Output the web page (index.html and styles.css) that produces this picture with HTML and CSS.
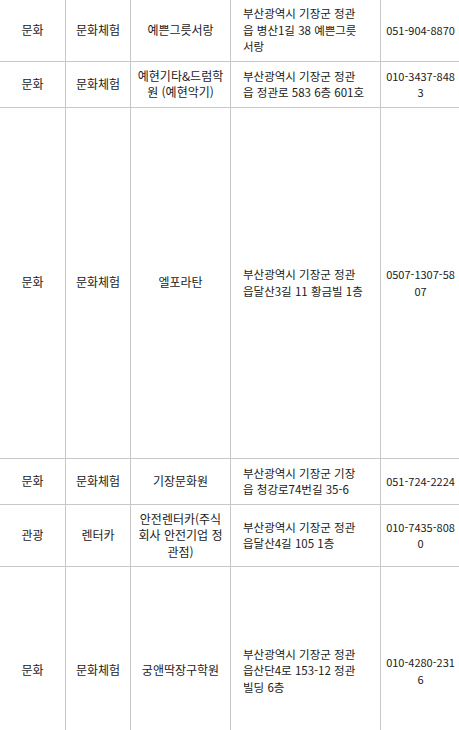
FILE: index.html
```html
<!DOCTYPE html>
<html lang="ko">
<head>
<meta charset="utf-8">
<link rel="stylesheet" href="styles.css">
</head>
<body>
<div class="wrap">
<table class="list">
  <colgroup>
    <col class="c1"><col class="c2"><col class="c3"><col class="c4"><col class="c5">
  </colgroup>
  <tbody>
    <tr>
      <td>문화</td><td>문화체험</td><td>예쁜그릇서랑</td>
      <td class="addr">부산광역시 기장군 정관읍 병산1길 38 예쁜그릇서랑</td>
      <td class="tel">051-904-8870</td>
    </tr>
    <tr>
      <td>문화</td><td>문화체험</td><td>예현기타&amp;드럼학원 (예현악기)</td>
      <td class="addr">부산광역시 기장군 정관읍 정관로 583 6층 601호</td>
      <td class="tel">010-3437-8483</td>
    </tr>
    <tr class="tall">
      <td>문화</td><td>문화체험</td><td>엘포라탄</td>
      <td class="addr">부산광역시 기장군 정관읍달산3길 11 황금빌 1층</td>
      <td class="tel">0507-1307-5807</td>
    </tr>
    <tr>
      <td>문화</td><td>문화체험</td><td>기장문화원</td>
      <td class="addr">부산광역시 기장군 기장읍 청강로74번길 35-6</td>
      <td class="tel">051-724-2224</td>
    </tr>
    <tr>
      <td>관광</td><td>렌터카</td><td>안전렌터카(주식회사 안전기업 정관점)</td>
      <td class="addr">부산광역시 기장군 정관읍달산4길 105 1층</td>
      <td class="tel">010-7435-8080</td>
    </tr>
    <tr class="last">
      <td>문화</td><td>문화체험</td><td>궁앤딱장구학원</td>
      <td class="addr">부산광역시 기장군 정관읍산단4로 153-12 정관빌딩 6층</td>
      <td class="tel">010-4280-2316</td>
    </tr>
  </tbody>
</table>
</div>
</body>
</html>
```
FILE: styles.css
```css
html, body {
  margin: 0;
  padding: 0;
  background: #fff;
  overflow: hidden;
}
.wrap {
  width: 459px;
  height: 730px;
  overflow: hidden;
}
.list {
  border-collapse: collapse;
  table-layout: fixed;
  width: 461px;
  margin-top: -2px;
  margin-left: -1px;
  font-family: "Noto Sans CJK KR", "Noto Sans", sans-serif;
  font-size: 12px;
  line-height: 16.5px;
  color: #1a1a1a;
  word-break: break-all;
}
.c1 { width: 66px; }
.c2 { width: 65px; }
.c3 { width: 100px; }
.c4 { width: 150px; }
.c5 { width: 80px; }
.list td {
  border: 1px solid #c8c8c8;
  padding: 6px 5px;
  text-align: center;
  vertical-align: middle;
}
.list td.addr {
  font-size: 11.5px;
  text-align: left;
  padding-left: 12px;
  padding-right: 14.5px;
}
.list td.tel {
  font-size: 11px;
  padding-left: 4px;
  padding-right: 4px;
}
.tall { height: 351px; }
.last { height: 208px; }
```
